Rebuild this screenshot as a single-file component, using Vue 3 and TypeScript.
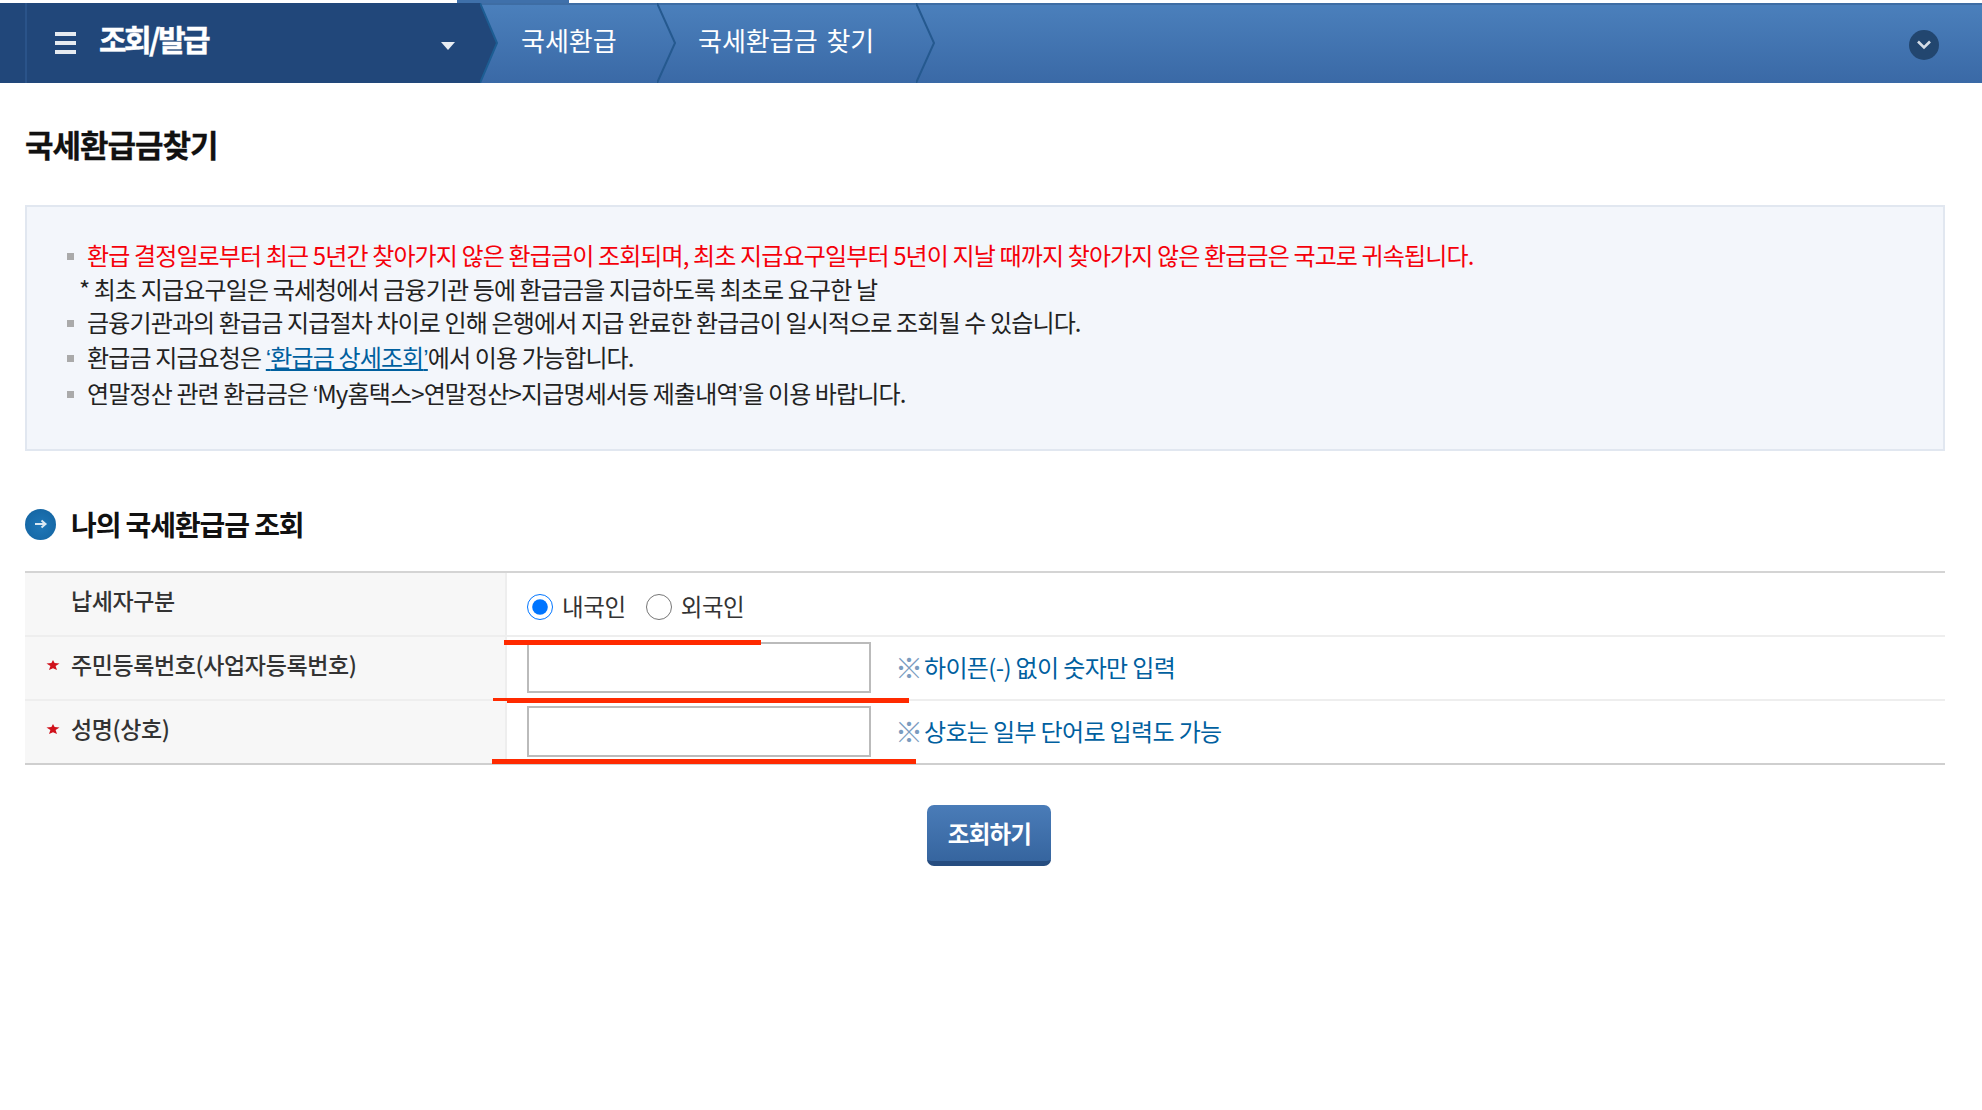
<script setup lang="ts">
const crumbs: { label: string; cls: string }[] = [
  { label: '국세환급', cls: 'c1' },
  { label: '국세환급금 찾기', cls: 'c2' },
]
</script>

<template>
  <div class="page">
    <div class="strip"><div class="strip-seg"></div></div>
    <header class="bar">
      <div class="menu">
        <div class="menu-edge"></div>
        <div class="burger"><i></i><i></i><i></i></div>
        <span class="menu-title">조회/발급</span>
        <span class="caret"></span>
        <svg class="chev chev-menu" width="20" height="80" viewBox="0 0 20 80">
          <polygon points="0,0 17,40 0,80" fill="#21477a" />
          <polyline points="0,0 17,40 0,80" fill="none" stroke="#1d5d93" stroke-width="2" />
        </svg>
      </div>
      <div v-for="c in crumbs" :key="c.label" class="crumb" :class="c.cls">
        {{ c.label }}
        <svg class="chev" width="20" height="80" viewBox="0 0 20 80">
          <polyline points="0,0 18,40 0,80" fill="none" stroke="#25598f" stroke-width="2" />
        </svg>
      </div>
      <div class="spacer"></div>
      <div class="round">
        <svg width="16" height="12" viewBox="0 0 16 12">
          <polyline points="2,2.5 8,8.5 14,2.5" fill="none" stroke="#d5dde6" stroke-width="2.6" />
        </svg>
      </div>
    </header>

    <main class="content">
      <h1 class="title">국세환급금찾기</h1>

      <section class="notice">
        <ul class="list">
          <li class="red">환급 결정일로부터 최근 5년간 찾아가지 않은 환급금이 조회되며, 최초 지급요구일부터 5년이 지날 때까지 찾아가지 않은 환급금은 국고로 귀속됩니다.</li>
          <li class="plain">* 최초 지급요구일은 국세청에서 금융기관 등에 환급금을 지급하도록 최초로 요구한 날</li>
          <li class="up">금융기관과의 환급금 지급절차 차이로 인해 은행에서 지급 완료한 환급금이 일시적으로 조회될 수 있습니다.</li>
          <li class="gap">환급금 지급요청은 <a class="link"><span class="q">‘</span>환급금 상세조회<span class="q">’</span></a>에서 이용 가능합니다.</li>
          <li class="gap2">연말정산 관련 환급금은 <span class="q">‘</span>My홈택스&gt;연말정산&gt;지급명세서등 제출내역<span class="q">’</span>을 이용 바랍니다.</li>
        </ul>
      </section>

      <h2 class="heading">
        <span class="dot">
          <svg width="14" height="12" viewBox="0 0 14 12">
            <path d="M1 6h10M7.5 2.5 11.5 6l-4 3.5" fill="none" stroke="#dbe8f2" stroke-width="2" />
          </svg>
        </span>
        나의 국세환급금 조회
      </h2>

      <div class="table">
        <div class="row">
          <div class="th">납세자구분</div>
          <div class="td radios">
            <label class="radio"><input type="radio" name="kind" checked />내국인</label>
            <label class="radio"><input type="radio" name="kind" />외국인</label>
          </div>
        </div>
        <div class="row">
          <div class="th">
            <svg class="star" width="14" height="12" viewBox="0 0 14 12"><polygon points="7,1 8.6,4 13.5,4.6 9.6,7 11,11 7,9.2 3,11 4.4,7 0.5,4.6 5.4,4" fill="#d0111b" /></svg>
            주민등록번호(사업자등록번호)
          </div>
          <div class="td field">
            <input class="box" type="text" />
            <span class="note"><span class="mark">※</span>하이픈(-) 없이 숫자만 입력</span>
            <span class="scribble s1"></span>
            <span class="scribble s2"></span>
          </div>
        </div>
        <div class="row last">
          <div class="th">
            <svg class="star" width="14" height="12" viewBox="0 0 14 12"><polygon points="7,1 8.6,4 13.5,4.6 9.6,7 11,11 7,9.2 3,11 4.4,7 0.5,4.6 5.4,4" fill="#d0111b" /></svg>
            성명(상호)
          </div>
          <div class="td field">
            <input class="box" type="text" />
            <span class="note"><span class="mark">※</span>상호는 일부 단어로 입력도 가능</span>
            <span class="scribble s3"></span>
          </div>
        </div>
      </div>

      <div class="actions">
        <button class="submit" type="button">조회하기</button>
      </div>
    </main>
  </div>
</template>

<style scoped>
.page {
  width: 1982px;
  min-height: 1110px;
  background: #fff;
  font-family: "Noto Sans CJK KR", "Noto Sans", sans-serif;
  color: #222;
}
.strip { height: 3px; display: flex; }
.strip-seg { margin-left: 457px; width: 112px; background: #3f70aa; }
.bar {
  height: 80px;
  display: flex;
  align-items: stretch;
  background: linear-gradient(#4b80bc, #3a69a6);
  box-shadow: inset 0 2px 0 #3e6da4;
  color: #fff;
}
.menu {
  position: relative;
  width: 480px;
  display: flex;
  align-items: center;
  background: #21477a;
  flex: none;
}
.menu-edge { width: 2px; height: 100%; margin-left: 25px; background: #2a5389; }
.burger { margin-left: 28px; width: 21px; display: flex; flex-direction: column; gap: 5px; }
.burger i { display: block; height: 4px; background: #e6ebf1; }
.menu-title {
  margin-left: 23px;
  margin-top: -11px;
  font-size: 30px;
  font-weight: 700;
  letter-spacing: -2.6px;
  -webkit-text-stroke: 0.4px #fff;
}
.caret {
  position: absolute;
  left: 441px;
  top: 39px;
  border: 7px solid transparent;
  border-top: 8px solid #e8edf3;
  border-bottom: 0;
}
.chev { position: absolute; left: 100%; top: 0; }
.chev-menu { z-index: 1; }
.crumb {
  position: relative;
  display: flex;
  align-items: center;
  font-size: 26px;
  word-spacing: 3px;
  padding-bottom: 8px;
  box-sizing: border-box;
  white-space: pre;
}
.c1 { width: 177px; padding-left: 41px; }
.c2 { width: 259px; padding-left: 41px; }
.spacer { flex: 1; }
.round {
  align-self: center;
  width: 30px;
  height: 30px;
  margin: 4px 43px 0 0;
  border-radius: 50%;
  background: #22466f;
  display: flex;
  align-items: center;
  justify-content: center;
}
.content { padding: 0 37px 0 25px; }
.title {
  margin: 41px 0 41px;
  font-size: 31px;
  line-height: 40px;
  font-weight: 700;
  letter-spacing: -1px;
  color: #111;
  -webkit-text-stroke: 0.3px #111;
}
.notice {
  border: 2px solid #e1e7f0;
  background: #f3f6fb;
  padding: 31px 20px 39px 40px;
}
.list { list-style: none; margin: 0; padding: 0; }
.list li {
  position: relative;
  height: 34px;
  padding-left: 20px;
  line-height: 34px;
  font-size: 24px;
  letter-spacing: -0.86px;
  white-space: nowrap;
}
.list li::before {
  content: "";
  position: absolute;
  left: 0;
  top: 15px;
  width: 7px;
  height: 7px;
  background: #aaa;
}
.list .plain { padding-left: 12px; }
.list .plain::before { display: none; }
.list .up { margin-top: -1px; }
.list .gap { margin-top: 1px; }
.list .gap2 { margin-top: 2px; }
.q { font-family: "Liberation Sans", sans-serif; }
.red { color: #f5000a; }
.link { color: #00609f; text-decoration: underline; }
.heading {
  display: flex;
  align-items: center;
  margin: 53px 0 27px;
  font-size: 28px;
  line-height: 40px;
  font-weight: 700;
  letter-spacing: -1.1px;
  color: #111;
}
.dot {
  width: 31px;
  height: 31px;
  margin-right: 15px;
  border-radius: 50%;
  background: radial-gradient(circle at 50% 55%, #1f77b8, #1668a6 70%, #2a6a9e);
  display: flex;
  align-items: center;
  justify-content: center;
}
.table { border-top: 2px solid #d4d4d4; }
.row {
  display: grid;
  grid-template-columns: 482px 1fr;
  height: 64px;
  box-sizing: border-box;
  border-bottom: 2px solid #eee;
}
.row.last { border-bottom-color: #cfcfcf; }
.th {
  position: relative;
  display: flex;
  align-items: center;
  padding: 0 0 8px 46px;
  background: #f7f7f7;
  border-right: 2px solid #eee;
  font-size: 23px;
  font-weight: 500;
  letter-spacing: -0.4px;
  color: #333;
}
.star { position: absolute; left: 21px; top: 22px; }
.td { position: relative; display: flex; padding-left: 20px; }
.radios { align-items: center; gap: 20px; padding-top: 3px; box-sizing: border-box; }
.radio {
  display: flex;
  align-items: center;
  font-size: 23.5px;
  letter-spacing: -0.4px;
  color: #333;
  gap: 9px;
}
.radio input { width: 26px; height: 26px; margin: 3px 0 0; }
.field { align-items: flex-start; padding-top: 5px; box-sizing: border-box; }
.box {
  width: 344px;
  height: 51px;
  box-sizing: border-box;
  border: 2px solid #bbb;
  background: #fff;
  margin: 0;
  outline: none;
}
.note {
  display: flex;
  align-items: center;
  margin: 7px 0 0 24px;
  font-size: 24px;
  line-height: 36px;
  letter-spacing: -0.65px;
  color: #00609f;
}
.mark { color: #7b9cbf; font-size: 28px; width: 29px; font-weight: 300; }
.scribble { position: absolute; height: 5px; background: #ff2a00; }
.s1 { left: -3px; top: 3px; width: 257px; }
.s2 { left: -14px; top: 61px; width: 416px; }
.s3 { left: -15px; top: 58px; width: 424px; }
.actions { display: flex; justify-content: center; padding: 40px 0 0 8px; }
.submit {
  width: 124px;
  height: 61px;
  border: 0;
  border-bottom: 5px solid #264d80;
  border-radius: 7px;
  background: linear-gradient(#4a7cb8, #36659f);
  color: #fff;
  font-family: inherit;
  font-size: 23.5px;
  font-weight: 700;
  letter-spacing: -0.8px;
  padding: 0 0 0 1px;
}
</style>
